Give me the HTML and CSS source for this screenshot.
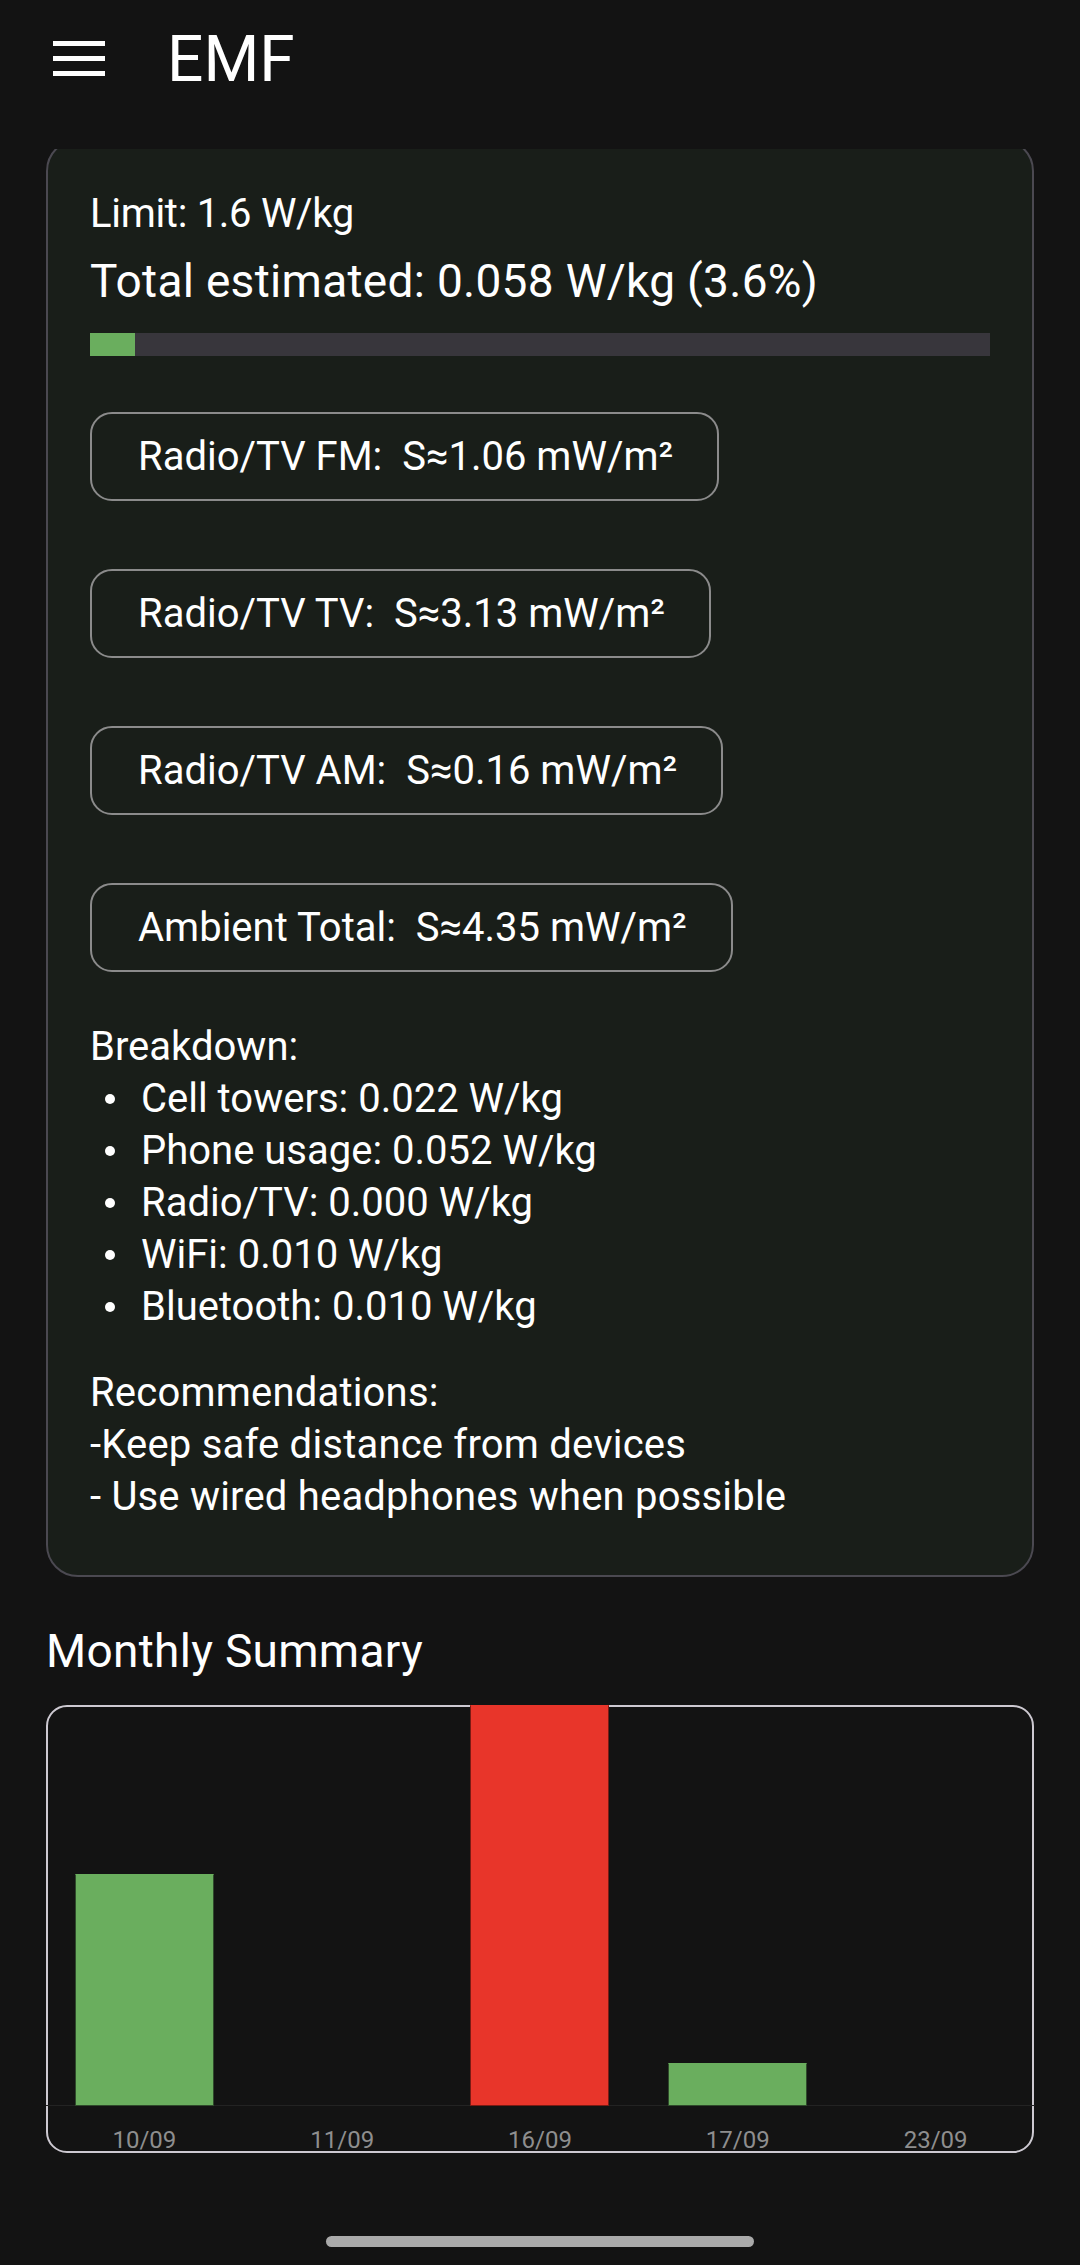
FILE: index.html
```html
<!DOCTYPE html>
<html lang="en">
<head>
<meta charset="utf-8">
<title>EMF</title>
<link rel="stylesheet" href="styles.css">
</head>
<body>
<div class="screen">
  <header class="appbar">
    <svg class="menu" width="52" height="35" viewBox="0 0 52 35" aria-hidden="true">
      <rect x="0" y="0" width="52" height="5" fill="#ffffff"/>
      <rect x="0" y="15" width="52" height="5" fill="#ffffff"/>
      <rect x="0" y="30" width="52" height="5" fill="#ffffff"/>
    </svg>
    <h1 class="title">EMF</h1>
  </header>

  <main class="content">
    <section class="card">
      <p class="limit">Limit: 1.6 W/kg</p>
      <p class="total">Total estimated: 0.058 W/kg (3.6%)</p>
      <div class="progress"><div class="progress-fill" style="width:45px"></div></div>

      <div class="chips">
        <div class="chip">Radio/TV FM:&nbsp; S≈1.06 mW/m²</div>
        <div class="chip">Radio/TV TV:&nbsp; S≈3.13 mW/m²</div>
        <div class="chip">Radio/TV AM:&nbsp; S≈0.16 mW/m²</div>
        <div class="chip">Ambient Total:&nbsp; S≈4.35 mW/m²</div>
      </div>

      <div class="breakdown">
        <p class="line">Breakdown:</p>
        <ul class="bullets">
          <li>Cell towers: 0.022 W/kg</li>
          <li>Phone usage: 0.052 W/kg</li>
          <li>Radio/TV: 0.000 W/kg</li>
          <li>WiFi: 0.010 W/kg</li>
          <li>Bluetooth: 0.010 W/kg</li>
        </ul>
      </div>

      <div class="recs">
        <p class="line">Recommendations:</p>
        <p class="line">-Keep safe distance from devices</p>
        <p class="line">- Use wired headphones when possible</p>
      </div>
    </section>

    <h2 class="section-title">Monthly Summary</h2>

    <div class="chart">
      <div class="plot">
        <div class="slot"><div class="bar green" style="height:232px"></div></div>
        <div class="slot"></div>
        <div class="slot"><div class="bar red" style="height:401px"></div></div>
        <div class="slot"><div class="bar green" style="height:43px"></div></div>
        <div class="slot"></div>
      </div>
      <div class="axis">
        <span>10/09</span>
        <span>11/09</span>
        <span>16/09</span>
        <span>17/09</span>
        <span>23/09</span>
      </div>
    </div>
  </main>

  <div class="home-indicator"></div>
</div>
</body>
</html>
```

FILE: styles.css
```css
* { box-sizing: border-box; }

html, body {
  margin: 0;
  padding: 0;
  background: #131313;
}

body {
  font-family: Roboto, "Noto Sans", "Liberation Sans", sans-serif;
  color: #ffffff;
}

.screen {
  width: 1080px;
  height: 2265px;
  overflow: hidden;
  display: flex;
  flex-direction: column;
}

p, h1, h2, ul { margin: 0; padding: 0; }

/* App bar */
.appbar {
  position: relative;
  z-index: 2;
  height: 149px;
  flex: 0 0 149px;
  background: #131313;
  display: flex;
  align-items: flex-start;
  padding-left: 53px;
}

.menu {
  margin-top: 41px;
  display: block;
}

.title {
  margin-top: 22px;
  margin-left: 62px;
  font-size: 64px;
  line-height: 76px;
  font-weight: 400;
}

/* Content */
.content {
  padding: 0 46px;
  margin-top: -10px;
  display: flex;
  flex-direction: column;
}

.card {
  background: #191e19;
  border: 2.5px solid #4b4951;
  border-radius: 32px;
  padding: 47px 42px 52px 42px;
}

.limit {
  font-size: 40px;
  line-height: 52px;
  letter-spacing: -0.3px;
}

.total {
  margin-top: 12px;
  font-size: 46px;
  line-height: 58px;
  letter-spacing: 0.3px;
}

.progress {
  margin-top: 23px;
  height: 23px;
  background: #38363c;
}

.progress-fill {
  height: 100%;
  background: #6aae5e;
}

.chips {
  margin-top: 56px;
  display: flex;
  flex-direction: column;
  align-items: flex-start;
  gap: 68px;
}

.chip {
  height: 89px;
  display: flex;
  align-items: center;
  padding: 0 44px 0 46px;
  border: 2.5px solid #8b8b8b;
  border-radius: 22px;
  font-size: 40px;
  white-space: nowrap;
}

.breakdown {
  margin-top: 49px;
}

.line {
  font-size: 40px;
  line-height: 52px;
}

.bullets {
  list-style: none;
}

.bullets li {
  position: relative;
  font-size: 40px;
  line-height: 52px;
  padding-left: 51px;
}

.bullets li::before {
  content: "";
  position: absolute;
  left: 15px;
  top: 21px;
  width: 10px;
  height: 10px;
  border-radius: 50%;
  background: #ffffff;
}

.recs {
  margin-top: 34px;
}

.recs .line {
  letter-spacing: 0.2px;
}

.section-title {
  margin-top: 47px;
  font-size: 46px;
  line-height: 54px;
  font-weight: 400;
  letter-spacing: 0.3px;
}

/* Chart */
.chart {
  margin-top: 27px;
  height: 448px;
  border: 2.5px solid #cdc9d1;
  border-radius: 21px;
  display: flex;
  flex-direction: column;
}

.plot {
  margin: -2.5px -2.5px 0 -2.5px;
  height: 401px;
  display: grid;
  grid-template-columns: repeat(5, 1fr);
  align-items: end;
  border-bottom: 1px solid #232323;
}

.slot {
  height: 100%;
  display: flex;
  justify-content: center;
  align-items: flex-end;
}

.bar {
  width: 139px;
}

.bar.green {
  background: #6aae5e;
  border: 1px solid #2f4a2b;
  border-top-color: #6aae5e;
}

.bar.red {
  background: #e8352a;
  border: 1px solid #7a1b14;
  border-top-color: #e8352a;
}

.axis {
  margin: 22px -2.5px 0 -2.5px;
  display: grid;
  grid-template-columns: repeat(5, 1fr);
  font-size: 24px;
  line-height: 24px;
  color: #8e8e8e;
  text-align: center;
}

.home-indicator {
  margin: 83px auto 0 auto;
  width: 428px;
  height: 11px;
  border-radius: 6px;
  background: #aaaaaa;
}
```
